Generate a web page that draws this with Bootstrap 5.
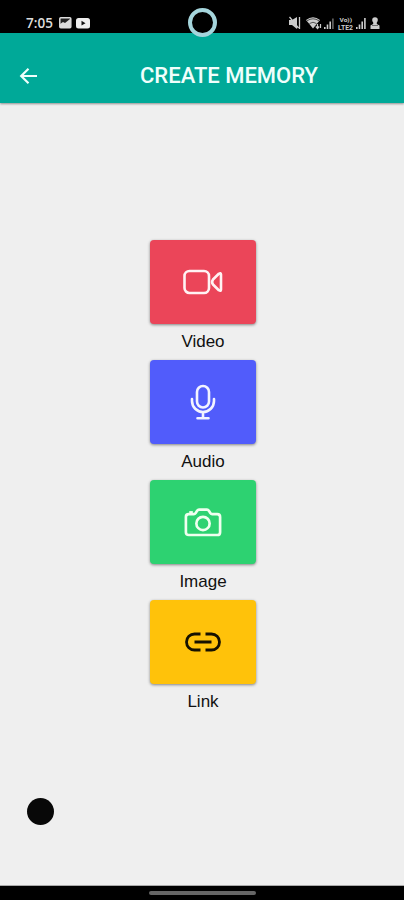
<!DOCTYPE html>
<html lang="en">
<head>
<meta charset="utf-8">
<meta name="viewport" content="width=device-width, initial-scale=1">
<title>Create Memory</title>
<link href="https://cdn.jsdelivr.net/npm/bootstrap@5.3.0/dist/css/bootstrap.min.css" rel="stylesheet">
<style>
  body { background: #efefef; color: #111; font-family: "Liberation Sans", Arial, sans-serif; }
  svg { display: block; flex: none; }
  .screen { height: 900px; }
  .status-bar { height: 33px; background: #000; padding: 13px 23px 0 26px; }
  .clock { font: 600 13.5px/20px "Open Sans", sans-serif; color: #ddd; width: 28px; margin-right: 5px; }
  .camera-ring { width: 29px; height: 29px; border: 4px solid #a5d5dc; background: #000; left: 188px; top: 8px; z-index: 2; }
  .app-bar { height: 70px; background: #00a998; box-shadow: 0 1px 2px rgba(0,0,0,.4); padding: 15px 0 0 19px; }
  .app-title { font: 500 22px/28px Roboto, sans-serif; color: #effffc; margin-left: 102px; white-space: nowrap; }
  .choices { padding-top: 137px; padding-left: 2px; }
  .choice { height: 120px; }
  .tile { width: 106px; height: 84px; border: 0; border-radius: 4px; box-shadow: 0 1px 3px rgba(0,0,0,.45); }
  .tile-video { background: #eb4559; }
  .tile-audio { background: #515cfb; }
  .tile-image { background: #2dd271; }
  .tile-link { background: #ffc20a; }
  .caption { font-size: 17px; line-height: 20px; margin-top: 8px; }
  .touch-dot { width: 27px; height: 27px; background: #080808; margin: 0 0 61px 27px; }
  .gesture-bar { height: 14px; background: #000; box-shadow: 0 -1px 0 #aaa; padding-top: 5px; padding-left: 1px; }
  .gesture-pill { width: 107px; height: 4px; background: #666; border-radius: 2px; }
</style>
</head>
<body>
<div class="screen d-flex flex-column position-relative overflow-hidden">
  <div class="status-bar d-flex justify-content-between align-items-start">
    <div class="d-flex align-items-center">
      <span class="clock">7:05</span>
      <svg width="32" height="20" viewBox="0 0 32 20">
        <rect x=".8" y="4.8" width="11" height="10" rx="1" fill="#222" stroke="#ddd" stroke-width="1.5"/>
        <path d="M1 14V11l3-2 2 1 5-4v8z" fill="#ddd"/>
        <rect x="17" y="5" width="14" height="10.5" rx="2.5" fill="#eee"/>
        <path d="M22.500 7.800v4.800l4-2.400z" fill="#111"/>
      </svg>
    </div>
    <svg width="92" height="20" viewBox="289 13 92 20" fill="#ccc">
      <path d="M289 20h3l5-3v12l-5-4h-3z"/>
      <path d="M289.500 17l9 11M299.500 17v12" fill="none" stroke="#ccc" stroke-width="1.300"/>
      <path d="M306 20q7-5.500 14 0l-7 8.500z"/>
      <path d="M307 20.800q6-4 12 0M309.500 23.500q3.500-2.500 7 0" fill="none" stroke="#333" stroke-width=".8"/>
      <path d="M317.500 24v4M315.800 26.500l1.700 2 1.700-2M320.500 28v-4" fill="none" stroke="#ccc" stroke-width="1.200"/>
      <path d="M324 27h1.600v2H324zM326.700 24.500h1.600V29h-1.600zM329.400 21.500h1.600V29h-1.600z"/>
      <path d="M332.100 18.500h1.600V29h-1.600z" opacity=".5"/>
      <text x="339.500" y="22" font-family="Roboto, sans-serif" font-size="5.500" font-weight="700" textLength="12.500" lengthAdjust="spacingAndGlyphs">Vo))</text>
      <text x="338" y="29.500" font-family="Roboto, sans-serif" font-size="6.500" font-weight="700" textLength="15" lengthAdjust="spacingAndGlyphs">LTE2</text>
      <path d="M356 27h1.600v2H356zM358.700 24.500h1.600V29h-1.600zM361.400 21.500h1.600V29h-1.600zM364.100 18h1.600v11h-1.600z"/>
      <circle cx="375" cy="20" r="2.800"/>
      <path d="M373.200 21h3.600v3l2.700 1.500v3.500h-9v-3.500l2.700-1.500z"/>
      <path d="M372 25.500h6" stroke="#555" stroke-width=".8"/>
    </svg>
  </div>
  <div class="camera-ring rounded-circle position-absolute"></div>

  <header class="app-bar d-flex align-items-center pb-0">
    <svg width="19" height="20" viewBox="0 1 19 20" fill="none" stroke="#effffc" stroke-width="2.200">
      <path d="M18 11H2.500M9.500 3.800L2.200 11l7.300 7.200"/>
    </svg>
    <h1 class="app-title mb-0">CREATE MEMORY</h1>
  </header>

  <main class="choices flex-grow-1 d-flex flex-column align-items-center">
    <div class="choice text-center">
      <button class="tile tile-video d-flex align-items-center justify-content-center p-0" aria-label="Video">
        <svg width="42" height="30" viewBox="0 0 42 30" fill="none" stroke="#fff2f3" stroke-width="2.600" stroke-linejoin="round">
          <rect x="2.500" y="4" width="24.500" height="22" rx="5"/>
          <path d="M31 12.500l5.800-5.700q2.200-1.500 2.200.8v14.800q0 2.300-2.200.8L31 17.500q-1.800-2.500 0-5z"/>
        </svg>
      </button>
      <div class="caption">Video</div>
    </div>
    <div class="choice text-center">
      <button class="tile tile-audio d-flex align-items-center justify-content-center p-0" aria-label="Audio">
        <svg width="28" height="38" viewBox="0 0 28 38" fill="none" stroke="#f2f3ff" stroke-width="2.600" stroke-linecap="round">
          <rect x="8" y="3" width="12" height="21.500" rx="6"/>
          <path d="M3 16v2a11 11 0 0 0 22 0v-2M14 29v6M8.500 35.200h11"/>
        </svg>
      </button>
      <div class="caption">Audio</div>
    </div>
    <div class="choice text-center">
      <button class="tile tile-image d-flex align-items-center justify-content-center p-0" aria-label="Image">
        <svg width="38" height="31" viewBox="0 0 40 32" fill="none" stroke="#efffef" stroke-width="2.800" stroke-linejoin="round">
          <path d="M5 7.200h5.300q1.200 0 2-1.200l1.500-2.300q.8-1.200 2-1.200h8.400q1.200 0 2 1.200L27.700 6q.8 1.200 2 1.200H35q3 0 3 3v16q0 3-3 3H5q-3 0-3-3v-16q0-3 3-3z"/>
          <path d="M5.500 5.400h3.800"/>
          <circle cx="20" cy="17" r="7"/>
        </svg>
      </button>
      <div class="caption">Image</div>
    </div>
    <div class="choice text-center">
      <button class="tile tile-link d-flex align-items-center justify-content-center p-0" aria-label="Link">
        <svg width="40" height="24" viewBox="0 0 40 24" fill="none" stroke="#161100" stroke-width="2.800">
          <path d="M17.500 4H11.500a8 8 0 0 0 0 16h6M22.500 4h6a8 8 0 0 1 0 16h-6M11.500 12h17"/>
        </svg>
      </button>
      <div class="caption">Link</div>
    </div>
  </main>

  <div class="touch-dot rounded-circle"></div>
  <footer class="gesture-bar d-flex justify-content-center"><div class="gesture-pill"></div></footer>
</div>
<script src="https://cdn.jsdelivr.net/npm/bootstrap@5.3.0/dist/js/bootstrap.bundle.min.js"></script>
</body>
</html>
